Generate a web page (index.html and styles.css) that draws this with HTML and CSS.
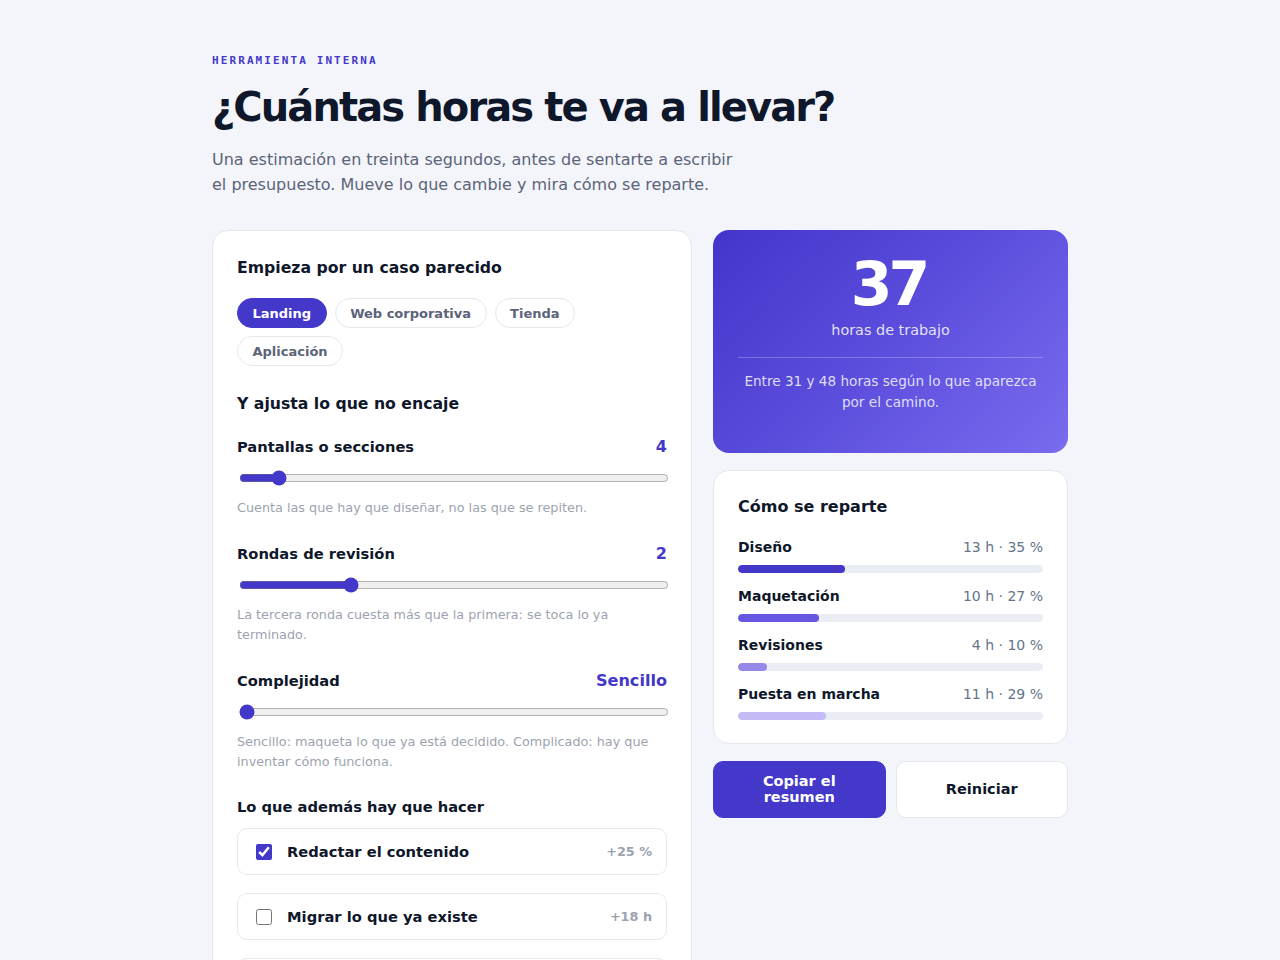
FILE: index.html
```html
<!DOCTYPE html>
<html lang="es">
<head>
<meta charset="utf-8">
<title>¿Cuántas horas te va a llevar?</title>
<link rel="stylesheet" href="styles.css">
</head>
<body>
<main class="page">
  <header class="intro">
    <p class="eyebrow">HERRAMIENTA INTERNA</p>
    <h1 class="title">¿Cuántas horas te va a llevar?</h1>
    <p class="lead">Una estimación en treinta segundos, antes de sentarte a escribir el presupuesto. Mueve lo que cambie y mira cómo se reparte.</p>
  </header>

  <div class="layout">
    <section class="card form-card">
      <h2 class="section-title">Empieza por un caso parecido</h2>
      <div class="chips">
        <button class="chip chip-active">Landing</button>
        <button class="chip">Web corporativa</button>
        <button class="chip">Tienda</button>
        <button class="chip">Aplicación</button>
      </div>

      <h2 class="section-title section-gap">Y ajusta lo que no encaje</h2>

      <div class="field">
        <div class="field-head">
          <span class="field-label">Pantallas o secciones</span>
          <span class="field-value">4</span>
        </div>
        <input class="range" type="range" min="1" max="40" value="4">
        <p class="hint">Cuenta las que hay que diseñar, no las que se repiten.</p>
      </div>

      <div class="field">
        <div class="field-head">
          <span class="field-label">Rondas de revisión</span>
          <span class="field-value">2</span>
        </div>
        <input class="range" type="range" min="0" max="8" value="2">
        <p class="hint">La tercera ronda cuesta más que la primera: se toca lo ya terminado.</p>
      </div>

      <div class="field">
        <div class="field-head">
          <span class="field-label">Complejidad</span>
          <span class="field-value field-value-lg">Sencillo</span>
        </div>
        <input class="range" type="range" min="0" max="2" value="0">
        <p class="hint">Sencillo: maqueta lo que ya está decidido. Complicado: hay que inventar cómo funciona.</p>
      </div>

      <h3 class="sub-title">Lo que además hay que hacer</h3>
      <div class="extras">
        <label class="extra">
          <input class="check" type="checkbox" checked>
          <span class="extra-label">Redactar el contenido</span>
          <span class="extra-cost">+25 %</span>
        </label>
        <label class="extra">
          <input class="check" type="checkbox">
          <span class="extra-label">Migrar lo que ya existe</span>
          <span class="extra-cost">+18 h</span>
        </label>
        <label class="extra">
          <input class="check" type="checkbox">
          <span class="extra-label">Formar al cliente</span>
          <span class="extra-cost">+4 h</span>
        </label>
      </div>
    </section>

    <aside class="side">
      <section class="result">
        <div class="result-num">37</div>
        <div class="result-unit">horas de trabajo</div>
        <div class="result-range">Entre 31 y 48 horas según lo que aparezca por el camino.</div>
      </section>

      <section class="card split">
        <h2 class="split-title">Cómo se reparte</h2>
        <div class="split-row">
          <div class="split-head"><span class="split-label">Diseño</span><span class="split-val">13 h · 35 %</span></div>
          <div class="bar"><div class="bar-fill c1" style="width:35%"></div></div>
        </div>
        <div class="split-row">
          <div class="split-head"><span class="split-label">Maquetación</span><span class="split-val">10 h · 27 %</span></div>
          <div class="bar"><div class="bar-fill c2" style="width:26.5%"></div></div>
        </div>
        <div class="split-row">
          <div class="split-head"><span class="split-label">Revisiones</span><span class="split-val">4 h · 10 %</span></div>
          <div class="bar"><div class="bar-fill c3" style="width:9.5%"></div></div>
        </div>
        <div class="split-row">
          <div class="split-head"><span class="split-label">Puesta en marcha</span><span class="split-val">11 h · 29 %</span></div>
          <div class="bar"><div class="bar-fill c4" style="width:29%"></div></div>
        </div>
      </section>

      <div class="actions">
        <button class="btn btn-primary">Copiar el resumen</button>
        <button class="btn btn-ghost">Reiniciar</button>
      </div>
    </aside>
  </div>
</main>
</body>
</html>
```

FILE: styles.css
```css
* { box-sizing: border-box; }

html, body {
  margin: 0;
  background: #f3f5fa;
  font-family: "DejaVu Sans", "Liberation Sans", sans-serif;
  color: #0f172a;
}

.page {
  width: 856px;
  margin: 0 auto;
  padding: 54px 0 40px;
}

.eyebrow {
  margin: 0;
  font-family: "DejaVu Sans Mono", "Liberation Mono", monospace;
  font-weight: bold;
  font-size: 11px;
  line-height: 13px;
  letter-spacing: 2.1px;
  color: #4338ca;
}

.title {
  margin: 16px 0 0;
  font-size: 40px;
  line-height: 48px;
  font-weight: bold;
  letter-spacing: -1.9px;
  color: #0f172a;
}

.lead {
  margin: 16px 0 0;
  max-width: 528px;
  font-size: 16px;
  line-height: 25px;
  color: #5b6478;
}

.layout {
  margin-top: 33px;
  display: grid;
  grid-template-columns: 480px 1fr;
  gap: 21px;
  align-items: start;
}

.card {
  background: #fff;
  border: 1px solid #e4e8ef;
  border-radius: 16px;
}

.form-card {
  padding: 27px 24px 24px;
}

.section-title {
  margin: 0;
  font-size: 15.7px;
  line-height: 20px;
  font-weight: bold;
}

.section-gap { margin-top: 28px; }

.chips {
  margin-top: 20px;
  display: flex;
  flex-wrap: wrap;
  gap: 8px;
}

.chip {
  height: 30px;
  padding: 0 14.5px;
  border: 1px solid #e4e8ef;
  border-radius: 999px;
  background: #fff;
  font-family: inherit;
  font-size: 13px;
  font-weight: bold;
  color: #5b6478;
}

.chip-active {
  background: #4338ca;
  border-color: #4338ca;
  color: #fff;
}

.field { margin-top: 22px; }
.field + .field { margin-top: 25px; }

.field-head {
  display: flex;
  justify-content: space-between;
  align-items: center;
  height: 20px;
}

.field-label {
  font-size: 14.7px;
  font-weight: bold;
}

.field-value {
  font-size: 16px;
  font-weight: bold;
  color: #4338ca;
}

.field-value-lg { font-size: 16.1px; }

.range {
  display: block;
  width: 100%;
  height: 16px;
  margin: 14px 0 0 2px;
  accent-color: #4338ca;
}

.hint {
  margin: 12px 0 0;
  font-size: 12.8px;
  line-height: 20px;
  color: #9ca3af;
}

.sub-title {
  margin: 25px 0 0;
  font-size: 14.7px;
  line-height: 20px;
  font-weight: bold;
}

.extras {
  margin-top: 11px;
  display: flex;
  flex-direction: column;
  gap: 18px;
}

.extra {
  display: flex;
  align-items: center;
  height: 47px;
  padding: 0 14px 0 18px;
  border: 1px solid #e4e8ef;
  border-radius: 10px;
  background: #fff;
}

.check {
  width: 16px;
  height: 16px;
  margin: 0;
  accent-color: #4338ca;
}

.extra-label {
  margin-left: 15px;
  flex: 1;
  font-size: 14.7px;
  font-weight: bold;
}

.extra-cost {
  font-size: 12.8px;
  font-weight: bold;
  color: #9ca3af;
}

.side {
  display: flex;
  flex-direction: column;
  gap: 17px;
}

.result {
  border-radius: 16px;
  padding: 24px 25px 40px;
  background: linear-gradient(135deg, #4335c9 0%, #5b4edd 50%, #7a6cee 100%);
  color: #fff;
  text-align: center;
}

.result-num {
  font-size: 60px;
  line-height: 60px;
  font-weight: bold;
  letter-spacing: -4px;
  text-indent: -4px;
}

.result-unit {
  margin-top: 6px;
  font-size: 14.4px;
  line-height: 20px;
  color: rgba(255,255,255,0.85);
}

.result-range {
  margin-top: 17px;
  padding-top: 13px;
  border-top: 1px solid rgba(255,255,255,0.25);
  font-size: 13.6px;
  line-height: 21px;
  color: rgba(255,255,255,0.82);
}

.split {
  padding: 26px 24px 23px;
}

.split-title {
  margin: 0 0 20px;
  font-size: 16px;
  line-height: 20px;
  font-weight: bold;
}

.split-row { margin-top: 13px; }

.split-head {
  display: flex;
  justify-content: space-between;
  align-items: center;
  height: 20px;
}

.split-label {
  font-size: 14px;
  font-weight: bold;
}

.split-val {
  font-size: 14px;
  color: #64748b;
}

.bar {
  margin-top: 8px;
  height: 8px;
  border-radius: 4px;
  background: #eaeef4;
  overflow: hidden;
}

.bar-fill { height: 100%; border-radius: 4px; }
.c1 { background: #4338ca; }
.c2 { background: #6557e2; }
.c3 { background: #9488e9; }
.c4 { background: #c4bbf5; }

.actions {
  display: grid;
  grid-template-columns: 1fr 1fr;
  gap: 10px;
}

.btn {
  height: 57px;
  padding: 0 40px;
  border-radius: 10px;
  font-family: inherit;
  font-size: 14.5px;
  line-height: 15.5px;
  font-weight: bold;
}

.btn-primary {
  background: #4338ca;
  border: 1px solid #4338ca;
  color: #fff;
}

.btn-ghost {
  background: #fff;
  border: 1px solid #e4e8ef;
  color: #0f172a;
}
```
